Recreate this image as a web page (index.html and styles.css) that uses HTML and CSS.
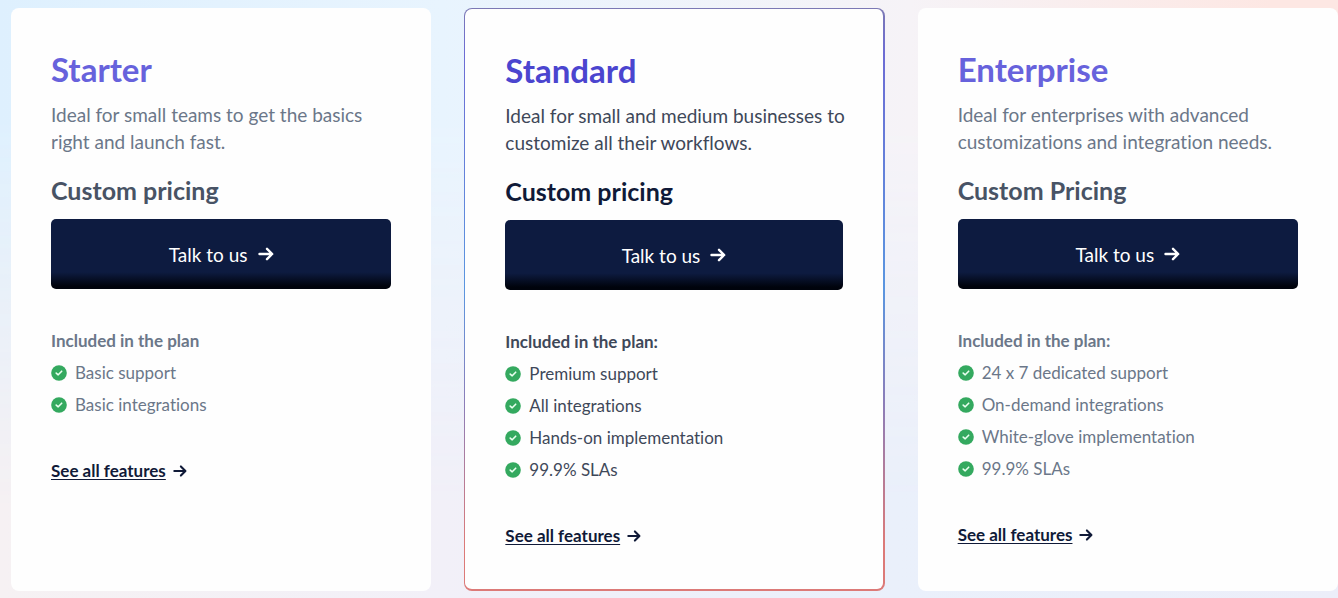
FILE: index.html
```
<!DOCTYPE html>
<html lang="en">
<head>
<meta charset="utf-8">
<meta name="viewport" content="width=device-width, initial-scale=1">
<title>Pricing plans</title>
<link rel="stylesheet" href="styles.css">
</head>
<body>
<svg class="sprite" aria-hidden="true">
  <symbol id="arrow" viewBox="0 0 16 16">
    <path d="M1.5 8H14M9 2.8L14.2 8L9 13.2" fill="none" stroke="currentColor" stroke-width="2.4" stroke-linecap="round" stroke-linejoin="round"/>
  </symbol>
  <symbol id="check" viewBox="0 0 16 16">
    <circle cx="8" cy="8" r="7.8" fill="#34a95f"/>
    <path d="M5.2 8.1L7.2 9.8L10.7 6.2" fill="none" stroke="#eafff0" stroke-width="1.6" stroke-linecap="round" stroke-linejoin="round"/>
  </symbol>
</svg>
<main class="plans">
  <section class="plan">
    <h2 class="plan-name">Starter</h2>
    <p class="plan-desc">Ideal for small teams to get the basics right and launch fast.</p>
    <p class="plan-price">Custom pricing</p>
    <button class="cta" type="button">Talk to us <svg class="cta-arrow" aria-hidden="true"><use href="#arrow"/></svg></button>
    <h3 class="included">Included in the plan</h3>
    <ul class="features">
      <li><svg class="check" aria-hidden="true"><use href="#check"/></svg>Basic support</li>
      <li><svg class="check" aria-hidden="true"><use href="#check"/></svg>Basic integrations</li>
    </ul>
    <a class="more" href="#starter"><span class="more-text">See all features</span><svg class="more-arrow" aria-hidden="true"><use href="#arrow"/></svg></a>
  </section>
  <section class="plan plan-featured">
    <h2 class="plan-name">Standard</h2>
    <p class="plan-desc">Ideal for small and medium businesses to customize all their workflows.</p>
    <p class="plan-price">Custom pricing</p>
    <button class="cta" type="button">Talk to us <svg class="cta-arrow" aria-hidden="true"><use href="#arrow"/></svg></button>
    <h3 class="included">Included in the plan:</h3>
    <ul class="features">
      <li><svg class="check" aria-hidden="true"><use href="#check"/></svg>Premium support</li>
      <li><svg class="check" aria-hidden="true"><use href="#check"/></svg>All integrations</li>
      <li><svg class="check" aria-hidden="true"><use href="#check"/></svg>Hands-on implementation</li>
      <li><svg class="check" aria-hidden="true"><use href="#check"/></svg>99.9% SLAs</li>
    </ul>
    <a class="more" href="#standard"><span class="more-text">See all features</span><svg class="more-arrow" aria-hidden="true"><use href="#arrow"/></svg></a>
  </section>
  <section class="plan">
    <h2 class="plan-name">Enterprise</h2>
    <p class="plan-desc">Ideal for enterprises with advanced customizations and integration needs.</p>
    <p class="plan-price">Custom Pricing</p>
    <button class="cta" type="button">Talk to us <svg class="cta-arrow" aria-hidden="true"><use href="#arrow"/></svg></button>
    <h3 class="included">Included in the plan:</h3>
    <ul class="features">
      <li><svg class="check" aria-hidden="true"><use href="#check"/></svg>24 x 7 dedicated support</li>
      <li><svg class="check" aria-hidden="true"><use href="#check"/></svg>On-demand integrations</li>
      <li><svg class="check" aria-hidden="true"><use href="#check"/></svg>White-glove implementation</li>
      <li><svg class="check" aria-hidden="true"><use href="#check"/></svg>99.9% SLAs</li>
    </ul>
    <a class="more" href="#enterprise"><span class="more-text">See all features</span><svg class="more-arrow" aria-hidden="true"><use href="#arrow"/></svg></a>
  </section>
</main>
</body>
</html>
```
FILE: styles.css
```
* {
  box-sizing: border-box;
}

body {
  margin: 0;
  font-family: Lato, "Open Sans", sans-serif;
  font-variant-ligatures: none;
  color: #6b7789;
  background: linear-gradient(90deg, #f6f1f3 0, #f2f0f8 33%, #eaf0fb 67%, #eceef9 100%);
}

/* Cool-to-warm tint that fades out towards the bottom of the page */
body::before {
  content: "";
  position: absolute;
  inset: 0;
  z-index: -1;
  background: linear-gradient(90deg, #deF0fe 0, #e8f4fe 33%, #f6f3f7 68%, #fde7e3 95%);
  mask-image: linear-gradient(#000 20%, transparent 85%);
}

.sprite {
  position: absolute;
  width: 0;
  height: 0;
}

.plans {
  display: grid;
  grid-template-columns: repeat(3, 1fr);
  gap: 33px;
  min-height: 100vh;
  padding: 8px 0 7px 11px;
}

.plan {
  padding: 39px 40px 40px;
  border-radius: 8px;
  background: #fefefe;
}

.plan-featured {
  border: solid transparent;
  border-width: 1px 2px 2px 1px;
  background:
    linear-gradient(#fefefe, #fefefe) padding-box,
    linear-gradient(#7c79b4 0, #6d6cd4 8%, #5a96e0 48%, #8c7db8 68%, #dc7a78 92%) border-box;
  color: #3e4859;
}

.plan-name {
  margin: 0 0 10px;
  font-size: 33px;
  line-height: 44px;
  font-weight: 700;
  color: #6762dc;
}

.plan-featured .plan-name {
  color: #4b45cf;
}

/* Lines may run slightly past the button's right edge */
.plan-desc {
  margin: 0 -12px 20px 0;
  font-size: 19px;
  line-height: 27px;
}

.plan-price {
  margin: 0 0 14px;
  font-size: 25px;
  line-height: 30px;
  font-weight: 700;
  color: #485365;
}

.plan-featured .plan-price {
  color: #101a38;
}

.cta {
  display: flex;
  align-items: center;
  justify-content: center;
  gap: 10px;
  width: 100%;
  height: 70px;
  margin-bottom: 40px;
  padding: 0;
  border: 0;
  border-radius: 5px;
  background: linear-gradient(#0d1b40 76%, #00030c 96%);
  color: #fff;
  font: inherit;
  font-size: 19px;
}

.cta-arrow {
  width: 16px;
  height: 16px;
}

.included {
  margin: 0 0 8px;
  font-size: 17px;
  line-height: 24px;
  font-weight: 700;
}

.features {
  display: grid;
  gap: 8px;
  margin: 0 0 42px;
  padding: 0;
  list-style: none;
  font-size: 17px;
  line-height: 24px;
}

.features li {
  display: flex;
  align-items: center;
  gap: 8px;
}

.check {
  width: 16px;
  height: 16px;
}

.more {
  display: inline-flex;
  align-items: center;
  gap: 7px;
  font-size: 17px;
  line-height: 24px;
  font-weight: 700;
  color: #101a38;
  text-decoration: none;
}

.more-text {
  text-decoration: underline;
  text-decoration-thickness: 1px;
  text-underline-offset: 2px;
}

.more-arrow {
  width: 14px;
  height: 14px;
}
```
